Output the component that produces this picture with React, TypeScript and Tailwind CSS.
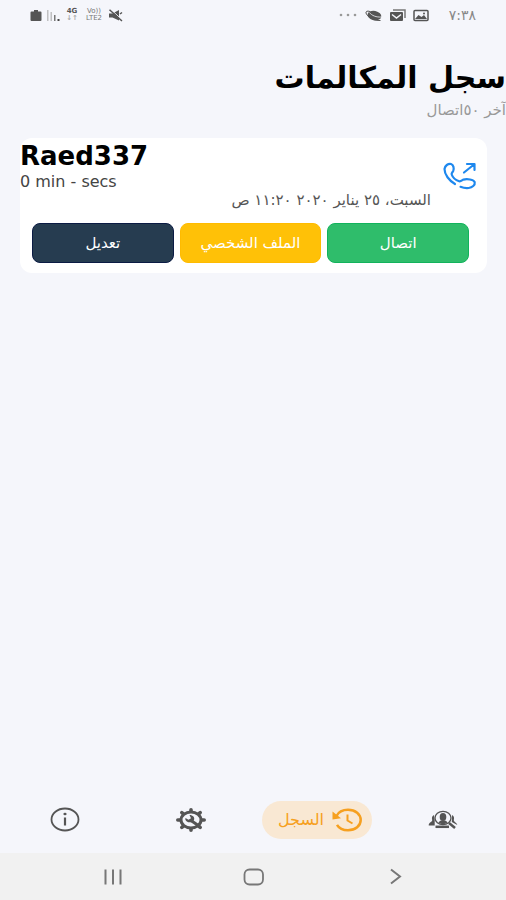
import type { ReactNode } from "react";

interface NavItem {
  id: string;
  label: string;
  icon: ReactNode;
  active?: boolean;
}

function StatusBar() {
  return (
    <div dir="ltr" className="flex h-[30px] items-center justify-between px-[30px] text-[#555]">
      <div className="flex items-center gap-1">
        <svg width="12" height="13" viewBox="0 0 12 13" fill="currentColor">
          <path d="M4 1h4v1.500h2.500a1 1 0 0 1 1 1V11a1 1 0 0 1-1 1h-9a1 1 0 0 1-1-1V3.500a1 1 0 0 1 1-1H4z" />
        </svg>
        <svg width="14" height="13" viewBox="0 0 14 13" fill="#aaa">
          <path d="M1 1h1.500v11H1zM4.500 3H6v9H4.500z" opacity=".7" />
          <path d="M8 6h1.500v6H8z" fill="#777" />
          <path d="M11.500 10h2v2h-2z" fill="#444" />
        </svg>
        <span className="flex w-4 flex-col items-center text-[7px] font-bold leading-[7px]">
          <span>4G</span>
          <span className="text-[#aaa]">↓↑</span>
        </span>
        <span className="flex w-5 flex-col items-center text-[7px] leading-[7px] text-[#777]">
          <span>Vo))</span>
          <span>LTE2</span>
        </span>
        <svg width="15" height="13" viewBox="0 0 15 13" fill="currentColor">
          <path d="M1 4.500h3.500L11 1v10.500L4.500 8.500H1z" />
          <path d="M2.500.3 14.500 11" stroke="#f5f6fb" strokeWidth="1" />
          <path d="M1.500.8 14 12M12 5l2-1.500" stroke="currentColor" strokeWidth="1.500" />
        </svg>
      </div>
      <div className="flex items-center">
        <svg width="18" height="4" viewBox="0 0 18 4" fill="#999">
          <circle cx="2" cy="2" r="1.300" />
          <circle cx="9" cy="2" r="1.300" />
          <circle cx="16" cy="2" r="1.300" />
        </svg>
        <svg className="ml-2" width="18" height="13" viewBox="0 0 18 13">
          <ellipse cx="9.500" cy="6.500" rx="7" ry="4.700" transform="rotate(12 9 6)" fill="currentColor" />
          <path d="M4.500 3.500c2 3 7 5 12 4.500" fill="none" stroke="#f5f6fb" strokeWidth=".8" />
          <path d="M5 2.500C2 1.500.6 2.500 1 4c.8 3.500 8 8 14.500 7.500" fill="none" stroke="currentColor" />
        </svg>
        <svg className="ml-[6px]" width="18" height="13" viewBox="0 0 18 13" fill="none">
          <path d="M4 1h12v8" stroke="#777" strokeWidth="1.500" />
          <rect x="1" y="3" width="13" height="9" rx="1" fill="currentColor" />
          <path d="M3 5.500 7.500 9 12 5.500" stroke="#f5f6fb" strokeWidth="1.500" />
        </svg>
        <svg className="ml-[6px]" width="16" height="13" viewBox="0 0 16 13" fill="none">
          <rect x="1" y="1.500" width="14" height="10" rx="1" stroke="currentColor" strokeWidth="1.500" />
          <path d="m2 10 3.500-4 3 2 2.500-2 3 4z" fill="currentColor" />
          <circle cx="11" cy="4.500" r="1" fill="currentColor" />
        </svg>
        <span className="ml-5 text-sm text-[#888]">٧:٣٨</span>
      </div>
    </div>
  );
}

function OutgoingCallIcon() {
  return (
    <svg width="34" height="28" viewBox="0 0 34 28" fill="none" stroke="#1e88ee" strokeWidth="2.200" strokeLinecap="round" strokeLinejoin="round">
      <path d="M12 22C6 18.500 1.500 12.500 1.500 7 2 3.500 5 1.500 8 2c2.500.8 3.300 4.500 2.200 7-.8 1.500-2 2-1.500 3.500 1 3 4.500 5.800 7.500 6.800 1.800.4 2.600-1 4.200-1.700 3.500-1 10.300-.2 11.300 2.600.6 3-2.500 5.300-6 5.800-2.800.3-5.700-.2-8.200-1.200" />
      <path d="M21 10.500 31 2.500M24 2h7.500v6" />
    </svg>
  );
}

function ContactsIcon() {
  return (
    <svg width="30" height="20" viewBox="0 0 30 20" fill="none" stroke="currentColor">
      <path d="M6 5c-2.300 1-2.300 3-1.800 5 .3 2-3.500 2-3.500 5.500h6V10zM24 5c2.300 1 2.300 3 1.800 5 0 2 2.500 2 3.500 5l-5.500-3z" fill="currentColor" stroke="none" />
      <path d="M7.500 16.800h13.500" strokeWidth="2.500" />
      <ellipse cx="15" cy="8" rx="8" ry="6.700" strokeWidth="1.300" />
      <ellipse cx="15" cy="7" rx="3.300" ry="4" fill="currentColor" stroke="none" />
      <path d="M10.500 12.500c1-1.800 2.500-2 4.500-2s3.500.2 4.500 2c-2.500 2-6.500 2-9 0z" fill="currentColor" stroke="none" />
      <path d="m21 13 6 5" strokeWidth="2.500" />
    </svg>
  );
}

function HistoryIcon() {
  return (
    <svg width="30" height="24" viewBox="0 0 30 24" fill="none" stroke="currentColor">
      <path d="M4.500 8C6.500 4 11 1.800 16 1.800c7.500 0 12.700 4.500 12.700 10.200S23.500 22.200 16 22.200c-5 0-9-2-11-5.400" strokeWidth="2.500" />
      <path d="M.5 3.500 9 10.200.5 11.500z" fill="currentColor" stroke="none" />
      <path d="M15.500 6.500v6l5 3" strokeWidth="2" />
    </svg>
  );
}

function SettingsIcon() {
  return (
    <svg width="30" height="24" viewBox="0 0 30 24" fill="none" stroke="currentColor">
      <path d="M15 1.800v20.400M1.800 12h26.400M5.800 4.700l18.400 14.600M24.200 4.700 5.800 19.300" strokeWidth="3.600" strokeLinecap="round" />
      <ellipse cx="15" cy="12" rx="10" ry="8" fill="#f5f6fb" strokeWidth="3" />
      <path d="m15 12.500 8 5.500" strokeWidth="3" />
      <path d="M13.500 7c3.500 0 5.500 2.500 4.500 5-1 2.500-5 3.200-7.500 1.200-1-.8-1.500-2-1-3.200l3 1.700 2.500-1.500z" fill="currentColor" stroke="none" />
    </svg>
  );
}

function InfoIcon() {
  return (
    <svg width="30" height="25" viewBox="0 0 30 25" fill="none" stroke="currentColor">
      <ellipse cx="15" cy="12.500" rx="13.500" ry="11" strokeWidth="1.800" />
      <path d="M15 10.500v8" strokeWidth="2.200" />
      <ellipse cx="15" cy="7" rx="1.600" ry="1.300" fill="currentColor" stroke="none" />
    </svg>
  );
}

const navItems: NavItem[] = [
  { id: "contacts", label: "جهات الاتصال", icon: <ContactsIcon /> },
  { id: "history", label: "السجل", icon: <HistoryIcon />, active: true },
  { id: "settings", label: "الإعدادات", icon: <SettingsIcon /> },
  { id: "info", label: "معلومات", icon: <InfoIcon /> },
];

function CallCard() {
  return (
    <article className="ml-5 mr-[19px] mt-4 rounded-xl bg-white pb-[10px] pt-1">
      <div className="flex items-center">
        <div className="w-14 shrink-0 pr-[10px] pt-1">
          <OutgoingCallIcon />
        </div>
        <div className="min-w-0 flex-1">
          <h2 dir="ltr" className="text-left text-[26px] leading-7 font-bold text-black">
            Raed337
          </h2>
          <p dir="ltr" className="text-left text-base leading-6 text-[#444]">
            0 min - secs
          </p>
          <p className="text-[15px] leading-3 text-[#555]">السبت، ٢٥ يناير ٢٠٢٠ ١١:٢٠ ص</p>
        </div>
      </div>
      <div className="mt-[17px] flex gap-[6px] pl-3 pr-[18px]">
        <button className="h-10 flex-1 rounded-lg border border-[#12b35c] bg-[#2fbd6b] text-[15px] text-white">اتصال</button>
        <button className="h-10 flex-1 rounded-lg border border-[#ffbb00] bg-[#ffc107] text-[15px] text-white">الملف الشخصي</button>
        <button className="h-10 flex-1 rounded-lg border border-[#0b1b44] bg-[#263c50] text-[15px] text-white">تعديل</button>
      </div>
    </article>
  );
}

export default function App() {
  return (
    <div dir="rtl" className="flex min-h-screen flex-col bg-[#f5f6fb] font-['DejaVu_Sans',sans-serif]">
      <StatusBar />
      <header className="pt-7">
        <h1 className="text-[30px] leading-10 font-bold text-black">سجل المكالمات</h1>
        <p className="text-[15px] leading-6 text-[#999]">آخر ٥٠اتصال</p>
      </header>

      <main className="flex-1">
        <CallCard />
      </main>

      <nav className="grid h-[67px] grid-cols-4 items-center pl-[2px]">
        {navItems.map((item) => (
          <div key={item.id} className="flex justify-center">
            {item.active ? (
              <button aria-current="page" className="flex h-[38px] w-[110px] items-center gap-2 rounded-full bg-[#f9e8d3] pr-[10px] text-base text-[#f6a020]">
                {item.icon}
                <span>{item.label}</span>
              </button>
            ) : (
              <button aria-label={item.label} className="p-1 text-[#555]">
                {item.icon}
              </button>
            )}
          </div>
        ))}
      </nav>

      <div dir="ltr" className="grid h-[47px] grid-cols-3 items-center justify-items-center bg-[#f1f1f1] pl-[42px] pr-10 text-[#777]">
        <button aria-label="التطبيقات الأخيرة">
          <svg width="20" height="16" viewBox="0 0 20 16" stroke="currentColor" strokeWidth="2">
            <path d="M2.500.5v15M10 .5v15M17.500.5v15" />
          </svg>
        </button>
        <button aria-label="الرئيسية">
          <svg width="22" height="18" viewBox="0 0 22 18" fill="none" stroke="currentColor" strokeWidth="1.800">
            <rect x="1.500" y="1.500" width="18.500" height="15" rx="5" />
          </svg>
        </button>
        <button aria-label="رجوع">
          <svg width="13" height="17" viewBox="0 0 13 17" fill="none" stroke="currentColor" strokeWidth="2">
            <path d="m2 1.500 9 7-9 7" />
          </svg>
        </button>
      </div>
    </div>
  );
}
